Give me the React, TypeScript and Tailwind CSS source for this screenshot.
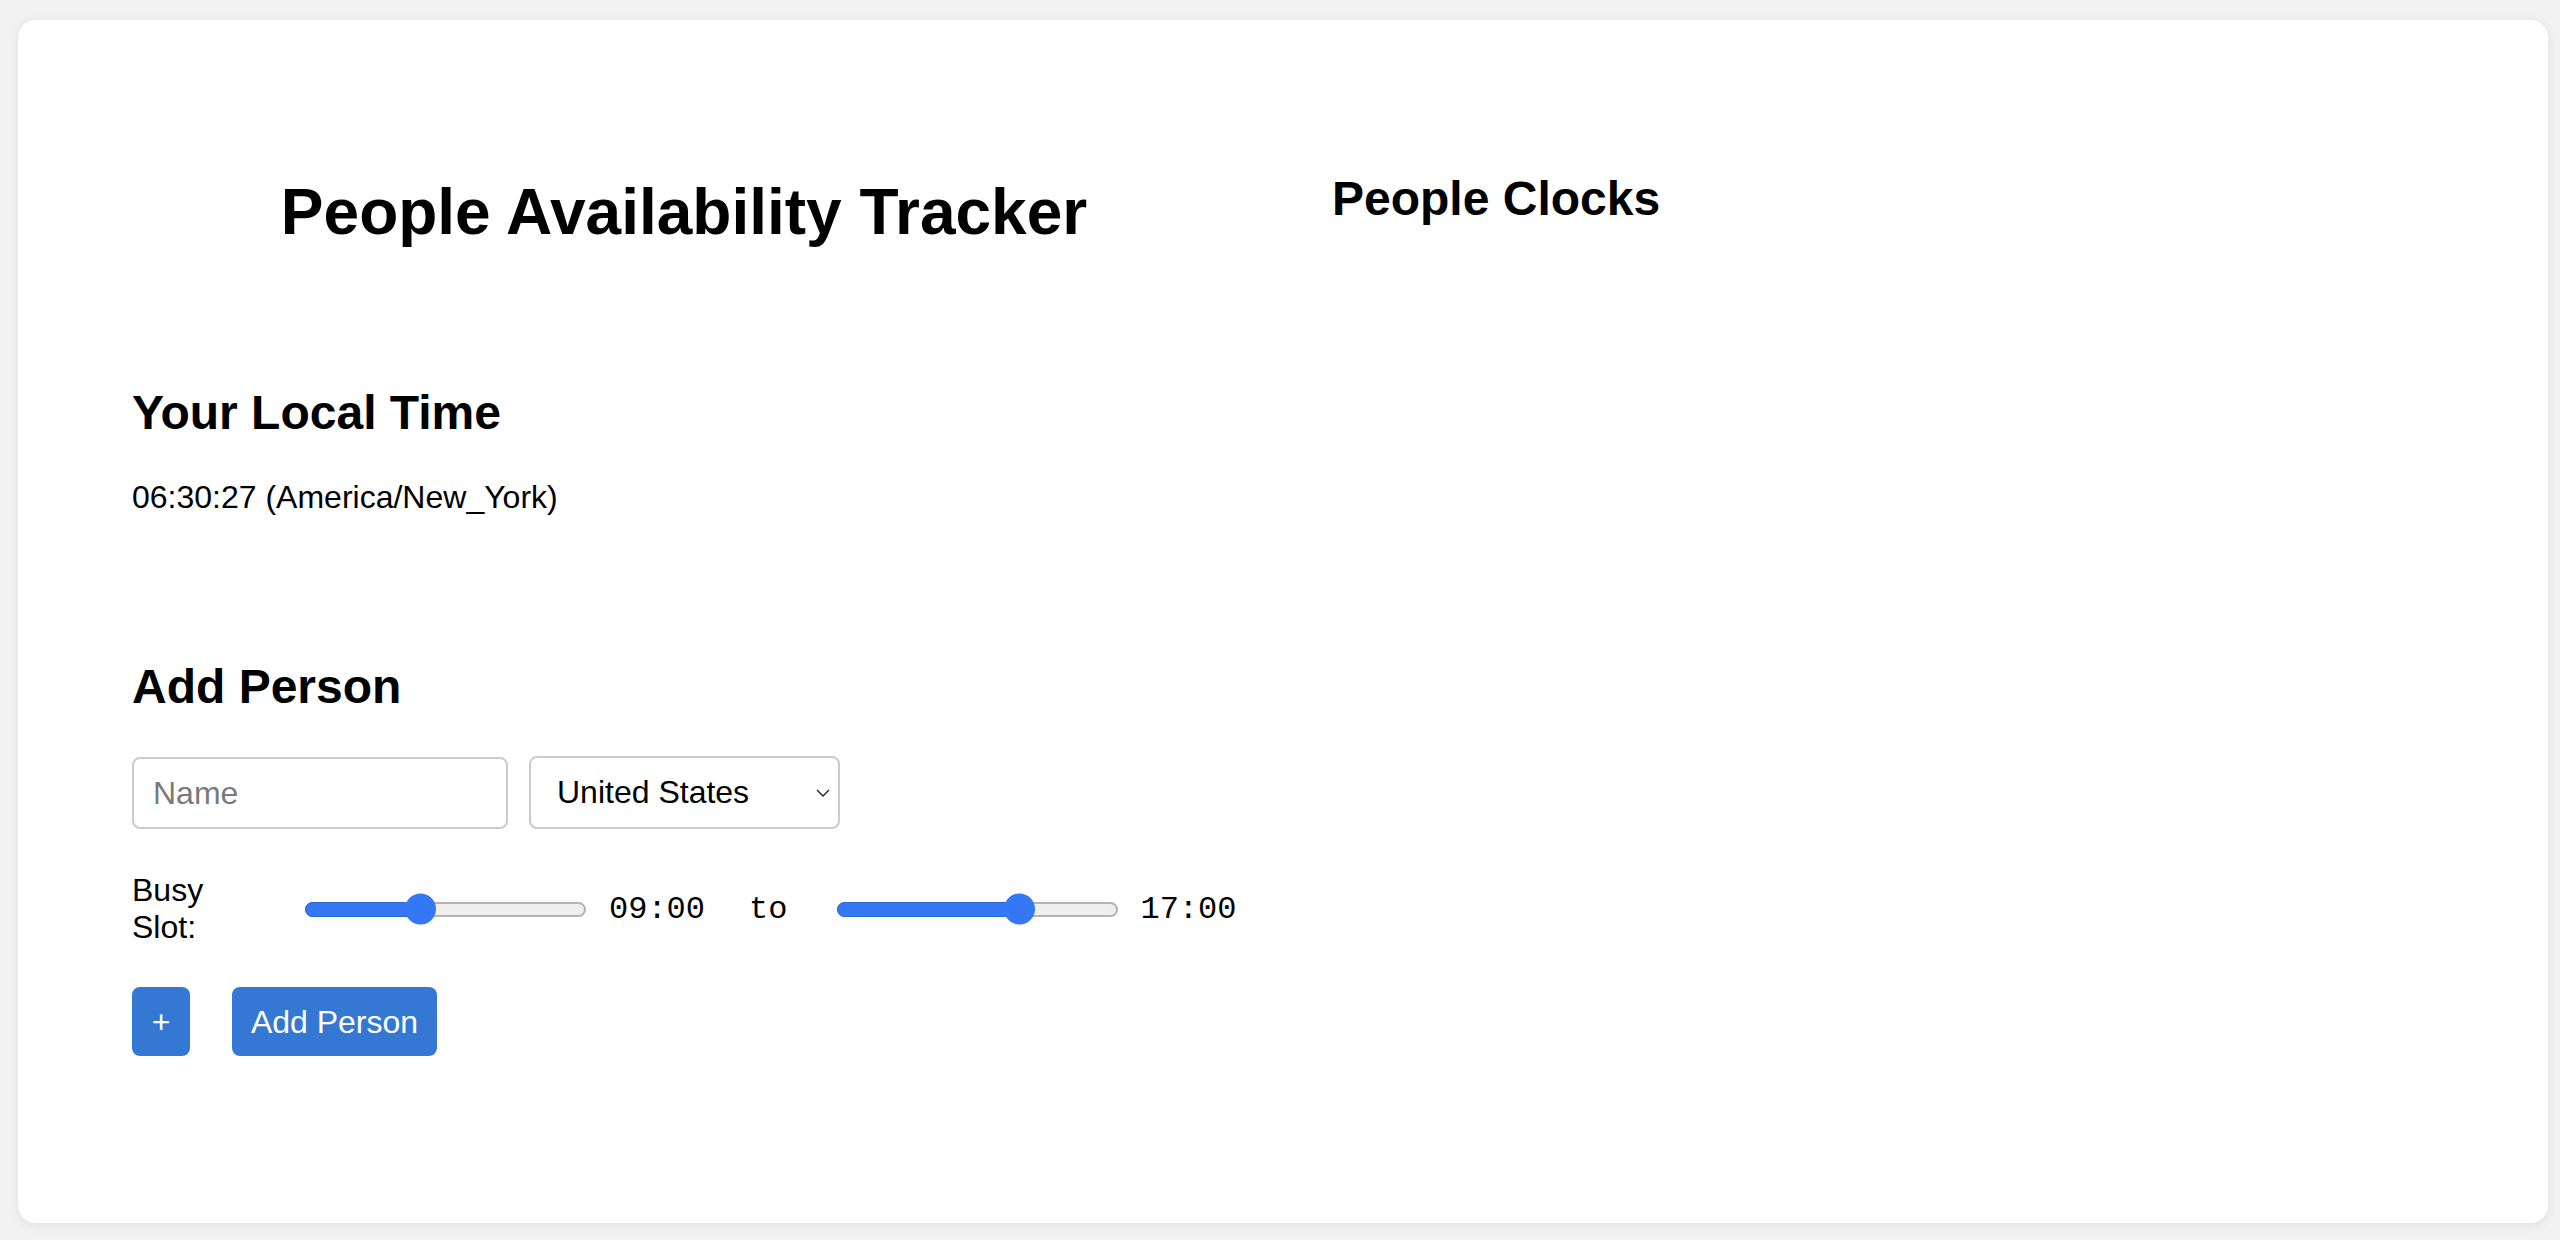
import React from "react";

const SANS = "font-['Liberation_Sans',Arial,sans-serif]";
const MONO = "font-['Liberation_Mono','Courier_New',monospace]";

function Slider({ thumb }: { thumb: number }) {
  // thumb = px offset of the thumb's left edge from the track's left edge
  return (
    <div className="relative h-[15px] w-[281px] shrink-0 rounded-full border-2 border-[#b3b3b3] bg-[#efefef]">
      <div
        className="absolute -left-[2px] -top-[2px] h-[15px] rounded-full border border-[#2f66cf] bg-[#3478f6]"
        style={{ width: thumb + 17 }}
      />
      <div
        className="absolute top-1/2 h-[31px] w-[31px] -translate-y-1/2 rounded-full bg-[#3478f6]"
        style={{ left: thumb - 2 }}
      />
    </div>
  );
}

export default function App() {
  return (
    <div className={`min-h-[1240px] bg-[#f2f2f2] pb-[17px] pl-[18px] pr-[12px] pt-[20px] text-black ${SANS}`}>
      <div className="flex h-[1203px] rounded-[18px] bg-white pl-[114px] shadow-[0_2px_12px_rgba(0,0,0,0.08)]">
        {/* left column */}
        <div className="flex w-[1104px] flex-col">
          <h1 className="mt-[155px] text-center text-[64px] font-bold leading-[74px]">
            People Availability Tracker
          </h1>

          <h2 className="mt-[136px] text-[48px] font-bold leading-[55px]">Your Local Time</h2>
          <p className="mt-[39px] text-[32px] leading-[37px]">06:30:27 (America/New_York)</p>

          <h2 className="mt-[143px] text-[48px] font-bold leading-[55px]">Add Person</h2>

          <div className="mt-[42px] flex items-start">
            <input
              placeholder="Name"
              className="mt-[1px] h-[72px] w-[376px] rounded-[8px] border-2 border-[#cbcbcb] bg-white pl-[19px] text-[32px] text-black outline-none placeholder:text-[#7a7a7a]"
            />
            <div className="ml-[21px] flex h-[73px] w-[311px] items-center rounded-[8px] border-2 border-[#cbcbcb] bg-white pl-[26px] pr-[8px]">
              <span className="flex-1 text-[32px] leading-[37px]">United States</span>
              <svg width="14" height="8" viewBox="0 0 14 8" fill="none">
                <path d="M1 1l6 6 6-6" stroke="#222" strokeWidth="1.4" />
              </svg>
            </div>
          </div>

          <div className="mt-[43px] flex items-center">
            <label className="w-[100px] shrink-0 text-[32px] leading-[37px]">Busy Slot:</label>
            <div className="ml-[73px]">
              <Slider thumb={100} />
            </div>
            <span className={`ml-[23px] text-[32px] leading-[37px] ${MONO}`}>09:00</span>
            <span className={`ml-[44px] text-[32px] leading-[37px] ${MONO}`}>to</span>
            <div className="ml-[50px]">
              <Slider thumb={167} />
            </div>
            <span className={`ml-[22px] text-[32px] leading-[37px] ${MONO}`}>17:00</span>
          </div>

          <div className="mt-[41px] flex">
            <button className="h-[69px] w-[58px] rounded-[8px] bg-[#3578d3] text-[32px] text-white">+</button>
            <button className="ml-[42px] h-[69px] w-[205px] rounded-[8px] bg-[#3578d3] text-[32px] text-white">
              Add Person
            </button>
          </div>
        </div>

        {/* right column */}
        <div className="ml-[96px] flex flex-col">
          <h2 className="mt-[151px] text-[48px] font-bold leading-[55px]">People Clocks</h2>
        </div>
      </div>
    </div>
  );
}
